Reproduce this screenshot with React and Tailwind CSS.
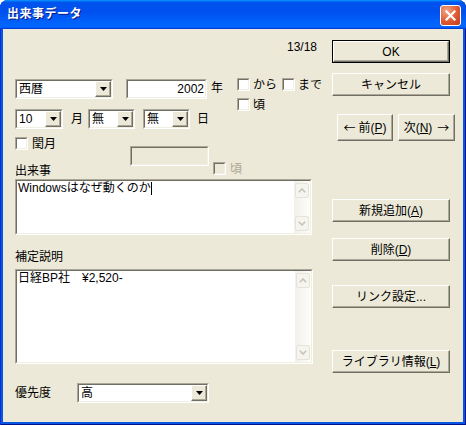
import React from "react";

function DropBtn() {
  return (
    <div className="w-[16px] h-full shrink-0 bg-[#ECE9D8] border border-t-white border-l-white border-r-[#716F64] border-b-[#716F64] shadow-[inset_-1px_-1px_#ACA899] flex items-center justify-center">
      <svg width="7" height="4" viewBox="0 0 7 4">
        <polygon points="0,0 7,0 3.5,4" fill="black" />
      </svg>
    </div>
  );
}

function Sunken({ className, inner, children }) {
  return (
    <div className={`${className} flex shrink-0 border border-t-[#ACA899] border-l-[#ACA899] border-r-white border-b-white`}>
      <div className={`${inner} flex-1 min-w-0 flex border border-t-[#716F64] border-l-[#716F64] border-r-[#F1EFE2] border-b-[#F1EFE2]`}>
        {children}
      </div>
    </div>
  );
}

function Combo({ className, text }) {
  return (
    <Sunken className={`${className} h-[20px]`} inner="bg-white">
      <span className="flex-1 pl-[2px] leading-[16px] whitespace-nowrap">{text}</span>
      <DropBtn />
    </Sunken>
  );
}

function Check({ disabled }) {
  return (
    <div className="w-[13px] h-[13px] shrink-0 border border-t-[#ACA899] border-l-[#ACA899] border-r-white border-b-white">
      <div
        className={`w-full h-full border border-t-[#716F64] border-l-[#716F64] border-r-[#F1EFE2] border-b-[#F1EFE2] ${
          disabled ? "bg-[#ECE9D8]" : "bg-white"
        }`}
      />
    </div>
  );
}

function Btn({ className, children }) {
  return (
    <div
      className={`${className} flex items-center justify-center bg-[#ECE9D8] border border-t-white border-l-white border-r-[#716F64] border-b-[#716F64] shadow-[inset_-1px_-1px_#ACA899] leading-[14px] whitespace-nowrap`}
    >
      {children}
    </div>
  );
}

function Arrow({ up }) {
  return (
    <div className="mx-[1px] h-[15px] shrink-0 rounded-[2px] border border-[#E6E4DA] bg-[#F5F4EF] flex items-center justify-center">
      <svg width="8" height="5" viewBox="0 0 8 5">
        <polyline
          points={up ? "0.8,4.2 4,1 7.2,4.2" : "0.8,0.8 4,4 7.2,0.8"}
          fill="none"
          stroke="#C6C4B8"
          strokeWidth="1.6"
        />
      </svg>
    </div>
  );
}

function ScrollBar() {
  return (
    <div className="w-[16px] shrink-0 flex flex-col py-[2px] bg-[linear-gradient(to_right,#F2F0E9,#FDFDFA)]">
      <Arrow up />
      <div className="flex-1" />
      <Arrow />
    </div>
  );
}

function TextBox({ className, children }) {
  return (
    <Sunken className={className} inner="bg-white">
      <div className="flex-1 min-w-0 pl-[1px] leading-[14px] whitespace-pre">{children}</div>
      <ScrollBar />
    </Sunken>
  );
}

function CloseBtn() {
  return (
    <div className="mt-[5px] mr-[5px] w-[21px] h-[21px] rounded-[3px] border border-white bg-[radial-gradient(circle_at_30%_25%,#F2A385,#DE5A33_55%,#C43A1A)] flex items-center justify-center">
      <svg width="11" height="11" viewBox="0 0 11 11">
        <path d="M1.5 1.5L9.5 9.5M9.5 1.5L1.5 9.5" stroke="white" strokeWidth="2.2" strokeLinecap="square" />
      </svg>
    </div>
  );
}

function LeftCol() {
  return (
    <div className="w-[317px] pl-[12px] flex flex-col shrink-0">
      <div className="mt-[11px] h-[14px] w-[302px] text-right leading-[14px]">13/18</div>

      <div className="mt-[24px] h-[31px] flex items-start">
        <Combo className="mt-[1px] w-[98px]" text="西暦" />
        <Sunken className="mt-[1px] ml-[13px] w-[81px] h-[20px]" inner="bg-white justify-end">
          <span className="pr-[1px] leading-[16px]">2002</span>
        </Sunken>
        <span className="mt-[3px] pl-[4px] w-[30px] leading-[14px] shrink-0">年</span>
        <div className="flex flex-col gap-[7px] shrink-0 whitespace-nowrap">
          <div className="flex items-center h-[13px] leading-[14px]">
            <Check />
            <span className="ml-[3px] w-[29px] shrink-0">から</span>
            <Check />
            <span className="ml-[3px] shrink-0">まで</span>
          </div>
          <div className="flex items-center h-[13px] leading-[14px]">
            <Check />
            <span className="ml-[3px]">頃</span>
          </div>
        </div>
      </div>

      <div className="h-[20px] flex items-center">
        <Combo className="w-[48px]" text="10" />
        <span className="w-[25px] pl-[8px] leading-[14px] shrink-0">月</span>
        <Combo className="w-[47px]" text="無" />
        <Combo className="ml-[8px] w-[47px]" text="無" />
        <span className="pl-[7px] leading-[14px]">日</span>
      </div>

      <div className="h-[50px] flex">
        <div className="w-[115px] shrink-0 flex flex-col">
          <div className="mt-[8px] h-[13px] flex items-center leading-[14px]">
            <Check />
            <span className="ml-[4px]">閏月</span>
          </div>
          <div className="mt-[14px] h-[14px] leading-[14px]">出来事</div>
        </div>
        <Sunken className="mt-[17px] w-[79px] h-[20px]" inner="bg-[#ECE9D8]" />
        <div className="ml-[4px] mt-[33px] h-[13px] flex items-center leading-[14px]">
          <Check disabled />
          <span className="ml-[4px] text-[#ACA899]">頃</span>
        </div>
      </div>

      <TextBox className="w-[297px] h-[56px]">
        <span>Windowsはなぜ動くのか</span>
        <span className="inline-block w-px h-[13px] bg-black align-middle" />
      </TextBox>

      <div className="mt-[15px] h-[14px] leading-[14px]">補定説明</div>

      <TextBox className="mt-[5px] w-[298px] h-[95px]">
        <span>日経BP社　¥2,520-</span>
      </TextBox>

      <div className="mt-[19px] h-[20px] flex items-center">
        <span className="w-[62px] shrink-0 leading-[14px]">優先度</span>
        <Combo className="w-[132px]" text="高" />
      </div>
    </div>
  );
}

function RightCol() {
  return (
    <div className="ml-[12px] w-[118px] flex flex-col shrink-0">
      <div className="mt-[11px] h-[23px] border border-black flex">
        <Btn className="flex-1">OK</Btn>
      </div>
      <Btn className="mt-[10px] h-[23px]">キャンセル</Btn>
      <div className="mt-[18px] h-[27px] flex ml-[5px] gap-[5px]">
        <Btn className="w-[56px] h-full shrink-0">
          <span className="font-['Noto_Sans_CJK_JP',sans-serif]">←</span>
          <span className="ml-[3px]">
            前(<span className="underline underline-offset-[1px]">P</span>)
          </span>
        </Btn>
        <Btn className="w-[57px] h-full shrink-0">
          <span>
            次(<span className="underline underline-offset-[1px]">N</span>)
          </span>
          <span className="ml-[5px] font-['Noto_Sans_CJK_JP',sans-serif]">→</span>
        </Btn>
      </div>
      <Btn className="mt-[58px] h-[23px]">
        新規追加(<span className="underline underline-offset-[1px]">A</span>)
      </Btn>
      <Btn className="mt-[16px] h-[23px]">
        削除(<span className="underline underline-offset-[1px]">D</span>)
      </Btn>
      <Btn className="mt-[24px] h-[23px]">リンク設定...</Btn>
      <Btn className="mt-[42px] h-[23px]">
        ライブラリ情報(<span className="underline underline-offset-[1px]">L</span>)
      </Btn>
    </div>
  );
}

export default function App() {
  return (
    <div className="w-[466px] h-[425px] bg-white font-['Liberation_Sans','Noto_Sans_CJK_JP',sans-serif] text-[12px] text-black">
      <div className="w-full h-full flex flex-col rounded-t-[8px] overflow-hidden bg-[#0A55E2] shadow-[inset_1px_0_#0831D9,inset_-1px_0_#00138C,inset_0_-1px_#00138C]">
        <div className="h-[29px] shrink-0 flex items-start justify-between bg-[linear-gradient(180deg,#0997ff,#0053ee_8%,#0050ee_40%,#06f_88%,#06f_93%,#005bff_95%,#003dd7_96%,#003dd7)]">
          <span className="pl-[7px] mt-[7px] font-bold text-white text-[12px] leading-[15px] tracking-[0.5px] [text-shadow:1px_1px_#0A1883]">
            出来事データ
          </span>
          <CloseBtn />
        </div>
        <div className="flex-1 mx-[3px] mb-[3px] bg-[#ECE9D8] flex">
          <LeftCol />
          <RightCol />
        </div>
      </div>
    </div>
  );
}
